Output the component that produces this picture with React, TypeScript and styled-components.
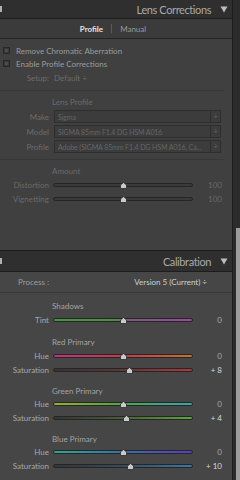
import React from "react";
import styled, { createGlobalStyle } from "styled-components";

const GlobalStyle = createGlobalStyle`
  *, *::before, *::after {
    box-sizing: border-box;
  }
  html, body {
    margin: 0;
    padding: 0;
    background: #3f3f3f;
  }
  body {
    font-family: Lato, "Open Sans", sans-serif;
  }
`;

type SliderProps = {
  label: string;
  value: string;
  pos: number;
  track: string;
  dim?: boolean;
  bright?: boolean;
};

const Slider: React.FC<SliderProps> = ({ label, value, pos, track, dim, bright }) => (
  <SliderRow $dim={dim}>
    <Label>{label}</Label>
    <TrackWrap>
      <Track style={{ background: track }} />
      <Thumb style={{ left: `${pos}%` }}>
        <svg width="7" height="7" viewBox="0 0 7 7">
          <path d="M3.5 0.5 L6.5 3 L6.5 6.5 L0.5 6.5 L0.5 3 Z" fill="#c9c9c9" stroke="#2a2a2a" strokeWidth="0.8" />
        </svg>
      </Thumb>
    </TrackWrap>
    <Value $bright={bright}>{value}</Value>
  </SliderRow>
);

const Arrow = () => (
  <svg width="8" height="7" viewBox="0 0 8 7">
    <path d="M0.5 0.5 L7.5 0.5 L4 6.5 Z" fill="#bdbdbd" />
  </svg>
);

const Select: React.FC<{ text: string }> = ({ text }) => (
  <SelectBox>
    <SelectText>{text}</SelectText>
    <Stepper>÷</Stepper>
  </SelectBox>
);

const App: React.FC = () => {
  return (
    <>
      <GlobalStyle />
      <Frame>
        <Column>
          <PanelHeader>
            <Edge />
            <Title>Lens Corrections</Title>
            <Arrow />
          </PanelHeader>
          <Tabs>
            <Tab $active>Profile</Tab>
            <TabSep />
            <Tab>Manual</Tab>
          </Tabs>
          <LensBody>
            <CheckRow>
              <Box />
              <span>Remove Chromatic Aberration</span>
            </CheckRow>
            <CheckRow>
              <Box />
              <span>Enable Profile Corrections</span>
            </CheckRow>
            <FieldRow>
              <Label>Setup:</Label>
              <DimText>Default ÷</DimText>
            </FieldRow>
            <Divider />
            <GroupTitle $dim>Lens Profile</GroupTitle>
            <FieldRow>
              <Label>Make</Label>
              <Select text="Sigma" />
            </FieldRow>
            <FieldRow>
              <Label>Model</Label>
              <Select text="SIGMA 85mm F1.4 DG HSM A016" />
            </FieldRow>
            <FieldRow>
              <Label>Profile</Label>
              <Select text="Adobe (SIGMA 85mm F1.4 DG HSM A016, Ca..." />
            </FieldRow>
            <Divider />
            <GroupTitle $dim>Amount</GroupTitle>
            <Slider dim label="Distortion" value="100" pos={50} track="#3a3a3a" />
            <Slider dim label="Vignetting" value="100" pos={50} track="#3a3a3a" />
          </LensBody>
          <PanelHeader $top>
            <Edge />
            <Title>Calibration</Title>
            <Arrow />
          </PanelHeader>
          <ProcessRow>
            <ProcessLabel>Process :</ProcessLabel>
            <ProcessValue>Version 5 (Current) ÷</ProcessValue>
          </ProcessRow>
          <CalBody>
            <Group>
              <GroupTitle>Shadows</GroupTitle>
              <Slider label="Tint" value="0" pos={50}
                track="linear-gradient(90deg, #3f9a3a, #4f8a48 45%, #7a5a80 55%, #a442a8)" />
            </Group>
            <Group>
              <GroupTitle>Red Primary</GroupTitle>
              <Slider label="Hue" value="0" pos={50}
                track="linear-gradient(90deg, #c2307e, #c83a48 50%, #c8702e)" />
              <Slider label="Saturation" value="+ 8" bright pos={54}
                track="linear-gradient(90deg, #353535, #5a3636 45%, #b03838)" />
            </Group>
            <Group>
              <GroupTitle $tight>Green Primary</GroupTitle>
              <Slider label="Hue" value="0" pos={50}
                track="linear-gradient(90deg, #98b02c, #48a84a 50%, #34a6b0)" />
              <Slider label="Saturation" value="+ 4" bright pos={52}
                track="linear-gradient(90deg, #353535, #455a35 45%, #5aa83a)" />
            </Group>
            <Group>
              <GroupTitle $tight>Blue Primary</GroupTitle>
              <Slider label="Hue" value="0" pos={50}
                track="linear-gradient(90deg, #2ea88e, #3470b0 50%, #5a3ac4)" />
              <Slider label="Saturation" value="+ 10" bright pos={55}
                track="linear-gradient(90deg, #353535, #354a5a 45%, #3a78a8)" />
            </Group>
          </CalBody>
        </Column>
        <Scroll>
          <ScrollThumb />
        </Scroll>
      </Frame>
    </>
  );
};

const Frame = styled.div`
  display: flex;
  width: 240px;
  height: 480px;
  overflow: hidden;
`;
const Column = styled.div`
  width: 233px;
  flex-shrink: 0;
  display: flex;
  flex-direction: column;
  border-right: 1px solid #1c1c1c;
  background: #464646;
`;
const Scroll = styled.div`
  flex: 1;
  display: flex;
  flex-direction: column;
  padding: 228px 0 0 3px;
  background: #2c2c2c;
`;
const ScrollThumb = styled.div`
  flex: 1;
  background: #9c9c9c;
`;
const PanelHeader = styled.div<{ $top?: boolean }>`
  height: ${(p) => (p.$top ? "22px" : "19px")};
  display: flex;
  align-items: center;
  gap: 9px;
  padding-right: 4px;
  background: #2f2f2f;
  border-top: ${(p) => (p.$top ? "1px solid #1b1b1b" : "none")};
  border-bottom: 1px solid #1d1d1d;
  flex-shrink: 0;
`;
const Edge = styled.span`
  margin-right: auto;
  width: 2px;
  height: 6px;
  background: #b0b0b0;
`;
const Title = styled.span`
  font-size: 11px;
  color: #a9a9a9;
  letter-spacing: -0.4px;
`;
const Tabs = styled.div`
  height: 20px;
  display: flex;
  align-items: center;
  justify-content: center;
  gap: 8px;
  background: #3b3b3b;
  border-bottom: 1px solid #242424;
  padding-right: 6px;
  flex-shrink: 0;
`;
const Tab = styled.span<{ $active?: boolean }>`
  font-size: 8px;
  color: ${(p) => (p.$active ? "#e2e2e2" : "#9a9a9a")};
  font-weight: ${(p) => (p.$active ? 700 : 400)};
`;
const TabSep = styled.span`
  width: 1px;
  height: 9px;
  background: #5a5a5a;
`;
const LensBody = styled.div`
  height: 211px;
  padding-top: 5px;
  background: #404040;
  display: flex;
  flex-direction: column;
  flex-shrink: 0;
`;
const CheckRow = styled.div`
  height: 13px;
  display: flex;
  align-items: center;
  gap: 6px;
  padding-left: 3px;
  font-size: 8px;
  color: #9c9c9c;
`;
const Box = styled.span`
  width: 7px;
  height: 7px;
  border: 1px solid #272727;
  background: #4c4c4c;
  box-shadow: inset 0 0 0 1px #383838;
`;
const FieldRow = styled.div`
  height: 15px;
  display: flex;
  align-items: center;
  gap: 5px;
  font-size: 8px;
  color: #6c6c6c;
`;
const Label = styled.span`
  width: 49px;
  flex-shrink: 0;
  text-align: right;
  white-space: nowrap;
`;
const DimText = styled.span`
  color: #6c6c6c;
`;
const Divider = styled.div`
  height: 1px;
  margin: 5px 8px 4px 0;
  background: #383838;
`;
const GroupTitle = styled.div<{ $dim?: boolean; $tight?: boolean }>`
  height: ${(p) => (p.$tight ? "12px" : "14px")};
  line-height: ${(p) => (p.$tight ? "12px" : "14px")};
  padding-left: 52px;
  font-size: 8px;
  color: ${(p) => (p.$dim ? "#6a6a6a" : "#a4a4a4")};
`;
const SelectBox = styled.div`
  width: 167px;
  height: 13px;
  display: flex;
  align-items: center;
  border: 1px solid #2e2e2e;
  background: #3c3c3c;
`;
const SelectText = styled.span`
  flex: 1;
  min-width: 0;
  padding-left: 3px;
  font-size: 7px;
  letter-spacing: -0.1px;
  color: #666;
  white-space: nowrap;
  overflow: hidden;
`;
const Stepper = styled.span`
  width: 10px;
  height: 11px;
  flex-shrink: 0;
  border-left: 1px solid #2e2e2e;
  font-size: 8px;
  line-height: 11px;
  text-align: center;
  color: #666;
`;
const SliderRow = styled.div<{ $dim?: boolean }>`
  height: 14px;
  display: flex;
  align-items: center;
  gap: 4px;
  font-size: 8px;
  color: ${(p) => (p.$dim ? "#6a6a6a" : "#a8a8a8")};
`;
const TrackWrap = styled.div`
  position: relative;
  width: 140px;
  height: 7px;
  display: flex;
  align-items: center;
`;
const Track = styled.div`
  width: 100%;
  height: 4px;
  border: 1px solid #262626;
  border-radius: 2px;
`;
const Thumb = styled.div`
  position: absolute;
  top: 0;
  width: 7px;
  height: 7px;
  margin-left: -3px;
  display: flex;
`;
const Value = styled.span<{ $bright?: boolean }>`
  width: 25px;
  text-align: right;
  color: ${(p) => (p.$bright ? "#d6d6d6" : "inherit")};
`;
const ProcessRow = styled.div`
  height: 21px;
  display: flex;
  align-items: center;
  justify-content: space-between;
  padding: 0 25px 0 18px;
  border-bottom: 1px solid #383838;
  font-size: 8px;
  flex-shrink: 0;
`;
const ProcessLabel = styled.span`
  color: #9e9e9e;
`;
const ProcessValue = styled.span`
  color: #d0d0d0;
`;
const CalBody = styled.div`
  flex: 1;
  padding-top: 6px;
  display: flex;
  flex-direction: column;
  gap: 8px;
`;
const Group = styled.div`
  display: flex;
  flex-direction: column;
`;

export default App;
